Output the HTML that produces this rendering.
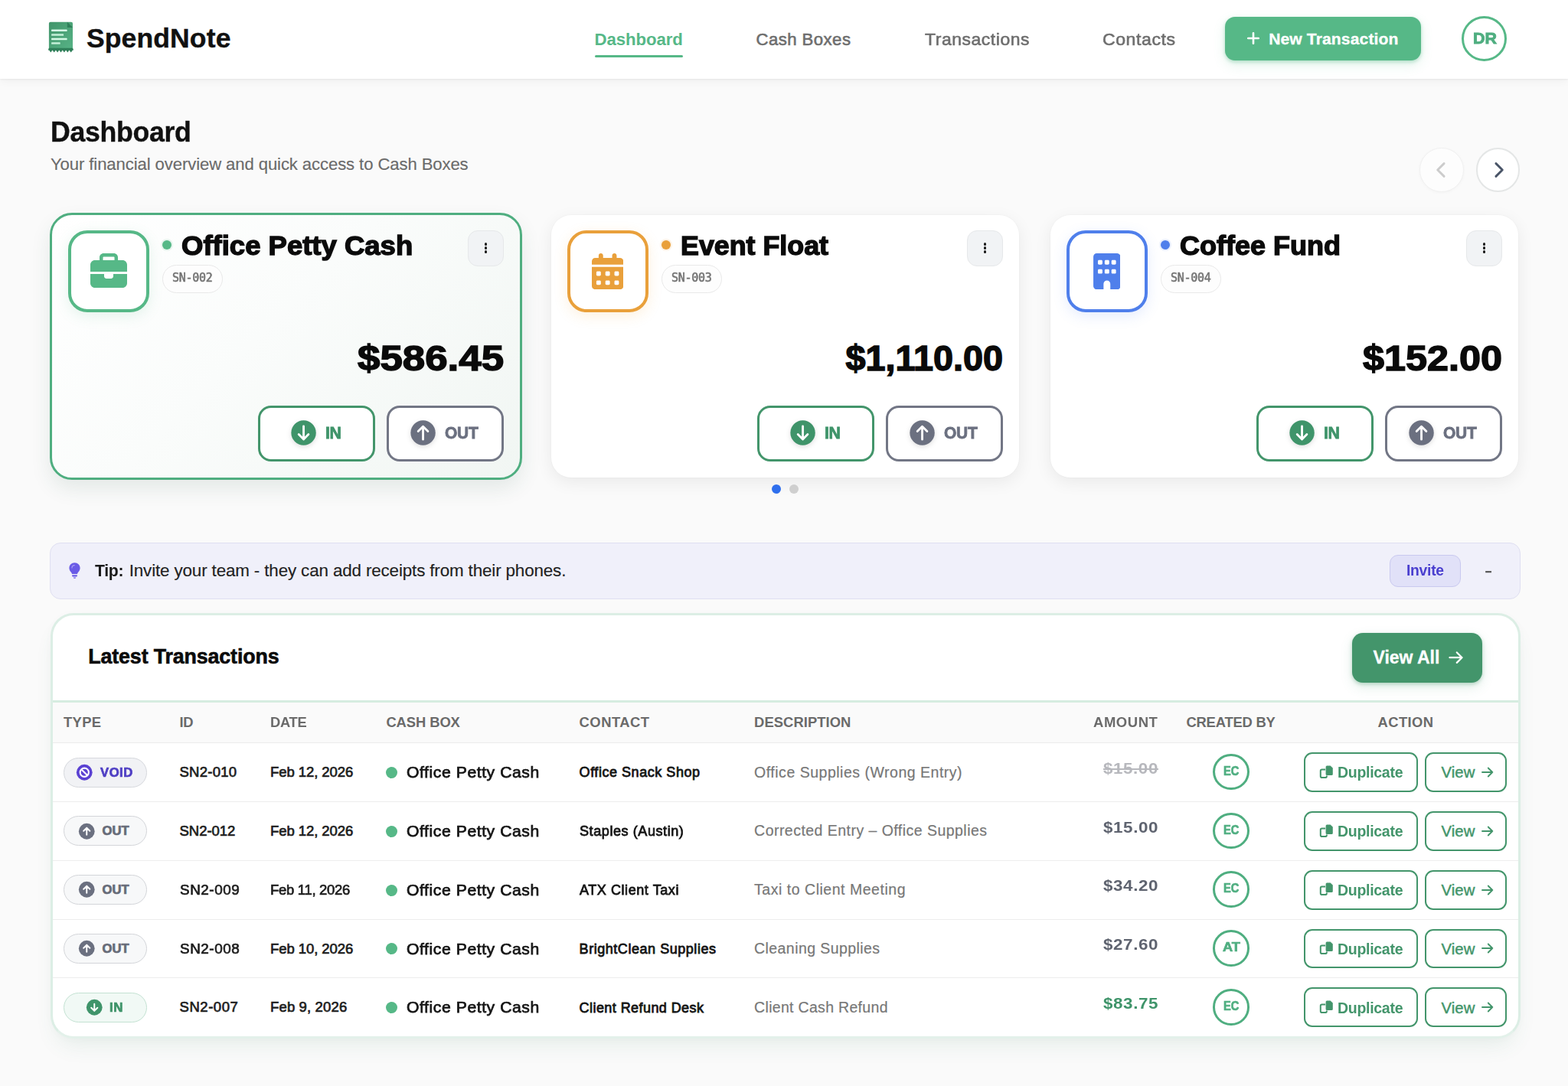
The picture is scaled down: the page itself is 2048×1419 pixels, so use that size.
<!DOCTYPE html>
<html lang="en"><head><meta charset="utf-8"><title>SpendNote Dashboard</title>
<style>
html,body{margin:0;padding:0}
body{width:2048px;height:1419px;overflow:hidden;position:relative;background:#fafafa;font-family:"Liberation Sans",sans-serif}
.t{position:absolute;white-space:nowrap;line-height:1;transform-origin:0 0;-webkit-font-smoothing:antialiased}
</style></head><body>
<div style="position:absolute;left:0px;top:0px;width:2048px;height:103px;box-sizing:border-box;background:#fff;box-shadow:0 1px 2px rgba(0,0,0,0.06),0 3px 12px rgba(0,0,0,0.045);"></div>
<svg style="position:absolute;left:60px;top:26px" width="40" height="46" viewBox="60 26 40 46">
<defs><linearGradient id="lg" x1="0" y1="0" x2="1" y2="1"><stop offset="0" stop-color="#41946a"/><stop offset="1" stop-color="#57b386"/></linearGradient></defs>
<path d="M65.9 28.7 H93 Q95 28.7 95 30.7 V64 H63.9 V30.7 Q63.9 28.7 65.900 28.7Z" fill="url(#lg)"/>
<path d="M87.8 28.7 L95 35.9 H87.8Z" fill="#2f7f59"/>
<path d="M63.9 62.8 H95 L96.2 65.4 L94.9 65.4 L92.7 68.6 L90.5 65.4 L88.3 68.6 L86.1 65.4 L83.9 68.6 L81.7 65.4 L79.5 68.6 L77.3 65.4 L75.1 68.6 L72.9 65.4 L70.7 68.6 L68.5 65.4 L66.3 68.6 L64.1 65.4 L62.8 65.4 Z" fill="#2f7f59"/>
<rect x="67.100" y="38.6" width="20.5" height="2.5" rx="0.6" fill="#d6fae6"/>
<rect x="67.100" y="44.3" width="16" height="2.5" rx="0.6" fill="#c4f0d8"/>
<rect x="67.100" y="49.8" width="20.5" height="2.5" rx="0.6" fill="#d6fae6"/>
<rect x="67.100" y="55.3" width="11.6" height="2.5" rx="0.6" fill="#c4f0d8"/>
</svg>
<div style="position:absolute;left:776.5px;top:71.5px;width:115.5px;height:3px;box-sizing:border-box;background:#56B887;border-radius:2px;"></div>
<div style="position:absolute;left:1600px;top:22px;width:256px;height:57px;box-sizing:border-box;background:#56B887;border-radius:13px;box-shadow:0 2px 5px rgba(86,184,135,0.40),0 6px 16px rgba(86,184,135,0.16);"></div>
<svg style="position:absolute;left:1629px;top:42px" width="16" height="16" viewBox="0 0 16 16"><path d="M8 1.200V14.800M1.200 8H14.800" stroke="#fff" stroke-width="2.6" stroke-linecap="round"/></svg>
<div style="position:absolute;left:1909px;top:21px;width:59.2px;height:59.2px;box-sizing:border-box;border:3.5px solid #56B887;border-radius:50%;background:#fff;"></div>
<div style="position:absolute;left:1854.2px;top:193px;width:57.6px;height:57.6px;box-sizing:border-box;border-radius:50%;background:#fdfdfd;border:1px solid #f1f1f1;box-shadow:0 1px 4px rgba(0,0,0,0.03);"></div>
<svg style="position:absolute;left:1871.8px;top:211.8px;overflow:visible" width="20" height="20" viewBox="0 0 20 20"><path d="M14.1 1.6 L5.7 10 L14.1 18.4" fill="none" stroke="#cccccc" stroke-width="2.9" stroke-linecap="round" stroke-linejoin="round"/></svg>
<div style="position:absolute;left:1927.9px;top:193px;width:57.6px;height:57.6px;box-sizing:border-box;border-radius:50%;background:#fff;border:2px solid #e4e6e6;"></div>
<svg style="position:absolute;left:1948.2px;top:211.8px;overflow:visible" width="20" height="20" viewBox="0 0 20 20"><path d="M5.9 1.6 L14.3 10 L5.9 18.4" fill="none" stroke="#4a5568" stroke-width="2.9" stroke-linecap="round" stroke-linejoin="round"/></svg>
<div style="position:absolute;left:65px;top:277.5px;width:617px;height:349.5px;box-sizing:border-box;border:3px solid #4FAE80;border-radius:29px;background:linear-gradient(135deg,#ffffff 0%,#fafcfb 45%,#f1f6f3 100%);box-shadow:0 12px 26px rgba(40,90,65,0.10);"></div>
<div style="position:absolute;left:88.5px;top:301.4px;width:106.3px;height:106.4px;box-sizing:border-box;border:4px solid #56B887;border-radius:25px;background:#fff;box-shadow:0 5px 18px rgba(86,184,135,0.15);"></div>
<svg style="position:absolute;left:117.5px;top:330.5px" width="48" height="45" viewBox="0 0 512 480"><path fill="#56B887" d="M184 48H328c4.400 0 8 3.600 8 8V96H176V56c0-4.400 3.600-8 8-8zm-56 8V96H64C28.700 96 0 124.700 0 160v96H192 320 512V160c0-35.300-28.700-64-64-64H384V56c0-30.900-25.100-56-56-56H184c-30.900 0-56 25.100-56 56zM512 288H320v32c0 17.700-14.300 32-32 32H224c-17.700 0-32-14.300-32-32V288H0V416c0 35.300 28.700 64 64 64H448c35.300 0 64-28.700 64-64V288z"/></svg>
<div style="position:absolute;left:212px;top:313.8px;width:12.4px;height:12.4px;box-sizing:border-box;background:#56B887;border-radius:50%;box-shadow:0 0 0 2px rgba(86,184,135,0.12);"></div>
<div style="position:absolute;left:212px;top:345.5px;width:79px;height:37.5px;box-sizing:border-box;border:1px solid #e9e9e9;border-radius:19px;background:#fdfdfd;"></div>
<div style="position:absolute;left:611px;top:301.2px;width:47px;height:47px;box-sizing:border-box;border:1px solid #e6e8ea;border-radius:13px;background:#f1f3f5;"></div>
<div style="position:absolute;left:632.7px;top:317.2px;width:3.6px;height:3.6px;box-sizing:border-box;background:#1a1a1a;border-radius:50%;"></div>
<div style="position:absolute;left:632.7px;top:322.3px;width:3.6px;height:3.6px;box-sizing:border-box;background:#1a1a1a;border-radius:50%;"></div>
<div style="position:absolute;left:632.7px;top:327.4px;width:3.6px;height:3.6px;box-sizing:border-box;background:#1a1a1a;border-radius:50%;"></div>
<div style="position:absolute;left:337.3px;top:529.7px;width:152.6px;height:73px;box-sizing:border-box;border:3px solid #43956B;border-radius:17px;background:#fff;"></div>
<svg style="position:absolute;left:378.65px;top:548.45px;overflow:visible;filter:drop-shadow(0 2px 3px rgba(0,0,0,0.13));" width="35.10" height="35.10" viewBox="-1 -1 26 26"><circle cx="12" cy="12" r="12" fill="#3f946a"/><path d="M12 5.6V18.1M7.3 13.5 L12 18.2 L16.7 13.5" fill="none" stroke="#fff" stroke-width="2.1" stroke-linecap="round" stroke-linejoin="round"/></svg>
<div style="position:absolute;left:505.3px;top:529.7px;width:152.8px;height:73px;box-sizing:border-box;border:3px solid #727685;border-radius:17px;background:#fff;"></div>
<svg style="position:absolute;left:534.85px;top:548.45px;overflow:visible;filter:drop-shadow(0 2px 3px rgba(0,0,0,0.13));" width="35.10" height="35.10" viewBox="-1 -1 26 26"><circle cx="12" cy="12" r="12" fill="#6b7080"/><path d="M12 18.4V5.9M7.3 10.5 L12 5.8 L16.7 10.5" fill="none" stroke="#fff" stroke-width="2.1" stroke-linecap="round" stroke-linejoin="round"/></svg>
<div style="position:absolute;left:720px;top:280.5px;width:611px;height:343.5px;box-sizing:border-box;border-radius:26px;background:#fff;box-shadow:0 6px 22px rgba(0,0,0,0.07),0 0 0 1px rgba(0,0,0,0.015);"></div>
<div style="position:absolute;left:740.5px;top:301.4px;width:106.3px;height:106.4px;box-sizing:border-box;border:4px solid #E9A03B;border-radius:25px;background:#fff;box-shadow:0 5px 18px rgba(240,160,50,0.15);"></div>
<svg style="position:absolute;left:772.5px;top:330.5px" width="41.3" height="47.2" viewBox="0 0 448 512"><path fill="#E9A03B" d="M128 0c17.700 0 32 14.300 32 32V64H288V32c0-17.700 14.300-32 32-32s32 14.300 32 32V64h48c26.500 0 48 21.500 48 48v48H0V112C0 85.500 21.500 64 48 64H96V32c0-17.700 14.300-32 32-32zM0 192H448V464c0 26.500-21.500 48-48 48H48c-26.500 0-48-21.500-48-48V192zm64 80v32c0 8.800 7.200 16 16 16h32c8.800 0 16-7.200 16-16V272c0-8.800-7.200-16-16-16H80c-8.800 0-16 7.200-16 16zm128 0v32c0 8.800 7.200 16 16 16h32c8.800 0 16-7.200 16-16V272c0-8.800-7.200-16-16-16H208c-8.800 0-16 7.200-16 16zm144-16c-8.800 0-16 7.200-16 16v32c0 8.800 7.200 16 16 16h32c8.800 0 16-7.200 16-16V272c0-8.800-7.200-16-16-16H336zM64 400v32c0 8.800 7.200 16 16 16h32c8.800 0 16-7.200 16-16V400c0-8.800-7.200-16-16-16H80c-8.800 0-16 7.200-16 16zm144-16c-8.800 0-16 7.200-16 16v32c0 8.800 7.200 16 16 16h32c8.800 0 16-7.200 16-16V400c0-8.800-7.200-16-16-16H208zm112 16v32c0 8.800 7.200 16 16 16h32c8.800 0 16-7.200 16-16V400c0-8.800-7.200-16-16-16H336c-8.800 0-16 7.200-16 16z"/></svg>
<div style="position:absolute;left:864px;top:313.8px;width:12.4px;height:12.4px;box-sizing:border-box;background:#E9A03B;border-radius:50%;box-shadow:0 0 0 2px rgba(240,160,50,0.12);"></div>
<div style="position:absolute;left:864px;top:345.5px;width:79px;height:37.5px;box-sizing:border-box;border:1px solid #e9e9e9;border-radius:19px;background:#fdfdfd;"></div>
<div style="position:absolute;left:1263px;top:301.2px;width:47px;height:47px;box-sizing:border-box;border:1px solid #e6e8ea;border-radius:13px;background:#f1f3f5;"></div>
<div style="position:absolute;left:1284.7px;top:317.2px;width:3.6px;height:3.6px;box-sizing:border-box;background:#1a1a1a;border-radius:50%;"></div>
<div style="position:absolute;left:1284.7px;top:322.3px;width:3.6px;height:3.6px;box-sizing:border-box;background:#1a1a1a;border-radius:50%;"></div>
<div style="position:absolute;left:1284.7px;top:327.4px;width:3.6px;height:3.6px;box-sizing:border-box;background:#1a1a1a;border-radius:50%;"></div>
<div style="position:absolute;left:989.3px;top:529.7px;width:152.6px;height:73px;box-sizing:border-box;border:3px solid #43956B;border-radius:17px;background:#fff;"></div>
<svg style="position:absolute;left:1030.65px;top:548.45px;overflow:visible;filter:drop-shadow(0 2px 3px rgba(0,0,0,0.13));" width="35.10" height="35.10" viewBox="-1 -1 26 26"><circle cx="12" cy="12" r="12" fill="#3f946a"/><path d="M12 5.6V18.1M7.3 13.5 L12 18.2 L16.7 13.5" fill="none" stroke="#fff" stroke-width="2.1" stroke-linecap="round" stroke-linejoin="round"/></svg>
<div style="position:absolute;left:1157.3px;top:529.7px;width:152.8px;height:73px;box-sizing:border-box;border:3px solid #727685;border-radius:17px;background:#fff;"></div>
<svg style="position:absolute;left:1186.85px;top:548.45px;overflow:visible;filter:drop-shadow(0 2px 3px rgba(0,0,0,0.13));" width="35.10" height="35.10" viewBox="-1 -1 26 26"><circle cx="12" cy="12" r="12" fill="#6b7080"/><path d="M12 18.4V5.9M7.3 10.5 L12 5.8 L16.7 10.5" fill="none" stroke="#fff" stroke-width="2.1" stroke-linecap="round" stroke-linejoin="round"/></svg>
<div style="position:absolute;left:1372px;top:280.5px;width:611px;height:343.5px;box-sizing:border-box;border-radius:26px;background:#fff;box-shadow:0 6px 22px rgba(0,0,0,0.07),0 0 0 1px rgba(0,0,0,0.015);"></div>
<div style="position:absolute;left:1392.5px;top:301.4px;width:106.3px;height:106.4px;box-sizing:border-box;border:4px solid #4F7FEB;border-radius:25px;background:#fff;box-shadow:0 5px 18px rgba(80,130,240,0.15);"></div>
<svg style="position:absolute;left:1427.5px;top:330.5px" width="35.6" height="47.3" viewBox="0 0 384 512"><path fill="#4F7FEB" d="M48 0C21.500 0 0 21.500 0 48V464c0 26.500 21.500 48 48 48h96V432c0-26.500 21.500-48 48-48s48 21.500 48 48v80h96c26.500 0 48-21.500 48-48V48c0-26.500-21.500-48-48-48H48zM64 240c0-8.800 7.200-16 16-16h32c8.800 0 16 7.200 16 16v32c0 8.800-7.200 16-16 16H80c-8.800 0-16-7.200-16-16V240zm112-16h32c8.800 0 16 7.200 16 16v32c0 8.800-7.200 16-16 16H176c-8.800 0-16-7.200-16-16V240c0-8.800 7.200-16 16-16zm80 16c0-8.800 7.200-16 16-16h32c8.800 0 16 7.200 16 16v32c0 8.800-7.200 16-16 16H272c-8.800 0-16-7.200-16-16V240zM80 96h32c8.800 0 16 7.200 16 16v32c0 8.800-7.200 16-16 16H80c-8.800 0-16-7.200-16-16V112c0-8.800 7.200-16 16-16zm80 16c0-8.800 7.200-16 16-16h32c8.800 0 16 7.200 16 16v32c0 8.800-7.200 16-16 16H176c-8.800 0-16-7.200-16-16V112zM272 96h32c8.800 0 16 7.200 16 16v32c0 8.800-7.200 16-16 16H272c-8.800 0-16-7.200-16-16V112c0-8.800 7.200-16 16-16z"/></svg>
<div style="position:absolute;left:1516px;top:313.8px;width:12.4px;height:12.4px;box-sizing:border-box;background:#4F7FEB;border-radius:50%;box-shadow:0 0 0 2px rgba(80,130,240,0.12);"></div>
<div style="position:absolute;left:1516px;top:345.5px;width:79px;height:37.5px;box-sizing:border-box;border:1px solid #e9e9e9;border-radius:19px;background:#fdfdfd;"></div>
<div style="position:absolute;left:1915px;top:301.2px;width:47px;height:47px;box-sizing:border-box;border:1px solid #e6e8ea;border-radius:13px;background:#f1f3f5;"></div>
<div style="position:absolute;left:1936.7px;top:317.2px;width:3.6px;height:3.6px;box-sizing:border-box;background:#1a1a1a;border-radius:50%;"></div>
<div style="position:absolute;left:1936.7px;top:322.3px;width:3.6px;height:3.6px;box-sizing:border-box;background:#1a1a1a;border-radius:50%;"></div>
<div style="position:absolute;left:1936.7px;top:327.4px;width:3.6px;height:3.6px;box-sizing:border-box;background:#1a1a1a;border-radius:50%;"></div>
<div style="position:absolute;left:1641.3px;top:529.7px;width:152.6px;height:73px;box-sizing:border-box;border:3px solid #43956B;border-radius:17px;background:#fff;"></div>
<svg style="position:absolute;left:1682.65px;top:548.45px;overflow:visible;filter:drop-shadow(0 2px 3px rgba(0,0,0,0.13));" width="35.10" height="35.10" viewBox="-1 -1 26 26"><circle cx="12" cy="12" r="12" fill="#3f946a"/><path d="M12 5.6V18.1M7.3 13.5 L12 18.2 L16.7 13.5" fill="none" stroke="#fff" stroke-width="2.1" stroke-linecap="round" stroke-linejoin="round"/></svg>
<div style="position:absolute;left:1809.3px;top:529.7px;width:152.8px;height:73px;box-sizing:border-box;border:3px solid #727685;border-radius:17px;background:#fff;"></div>
<svg style="position:absolute;left:1838.85px;top:548.45px;overflow:visible;filter:drop-shadow(0 2px 3px rgba(0,0,0,0.13));" width="35.10" height="35.10" viewBox="-1 -1 26 26"><circle cx="12" cy="12" r="12" fill="#6b7080"/><path d="M12 18.4V5.9M7.3 10.5 L12 5.8 L16.7 10.5" fill="none" stroke="#fff" stroke-width="2.1" stroke-linecap="round" stroke-linejoin="round"/></svg>
<div style="position:absolute;left:1007.7px;top:633.1px;width:12px;height:12px;box-sizing:border-box;background:#2f6fed;border-radius:50%;"></div>
<div style="position:absolute;left:1031px;top:633.1px;width:12px;height:12px;box-sizing:border-box;background:#cfcfcf;border-radius:50%;"></div>
<div style="position:absolute;left:65px;top:709.3px;width:1920.7px;height:74.2px;box-sizing:border-box;background:#f0f0fa;border:1px solid #dfdff1;border-radius:14px;"></div>
<svg style="position:absolute;left:89.500px;top:735px" width="15" height="21" viewBox="0 0 15 21"><path fill="#6a5be6" d="M7.500 0.300 C3.500 0.300 0.400 3.400 0.400 7.200 c0 2.300 1.100 3.900 2.300 5.200 c0.700 0.800 1.200 1.600 1.300 2.600 h7 c0.100-1 0.600-1.800 1.300-2.600 c1.200-1.300 2.300-2.900 2.300-5.200 C14.600 3.400 11.500 0.300 7.500 0.300z M4.200 16.300 h6.600 v1.100 c0 0.600-0.400 1-1 1 h-4.600 c-0.600 0-1-0.400-1-1z M5.800 19.400 h3.400 c0 0.800-0.800 1.400-1.700 1.400 s-1.700-0.600-1.700-1.400z"/><path d="M4 7 C4 5 5.500 3.700 7.300 3.600" stroke="#a79df3" stroke-width="1.100" fill="none" stroke-linecap="round"/></svg>
<div style="position:absolute;left:1815.2px;top:725.1px;width:93.3px;height:41.6px;box-sizing:border-box;background:#e1e1f8;border:1px solid #c9c9ef;border-radius:11px;"></div>
<div style="position:absolute;left:65.5px;top:801px;width:1920.3px;height:555.7px;box-sizing:border-box;background:#fff;border:3px solid #dceee5;border-bottom-color:#e3f1ea;border-radius:30px;box-shadow:0 16px 28px -8px rgba(60,140,100,0.11),0 1px 12px rgba(0,0,0,0.02);overflow:hidden;"><div style="position:absolute;left:0;top:111.3px;width:100%;height:3px;background:#d6ece0"></div><div style="position:absolute;left:0;top:114.3px;width:100%;height:52.7px;background:#fafafa;border-bottom:1px solid #ececec;box-sizing:border-box"></div><div style="position:absolute;left:0;top:243.00px;width:100%;height:1px;background:#ededed"></div><div style="position:absolute;left:0;top:319.82px;width:100%;height:1px;background:#ededed"></div><div style="position:absolute;left:0;top:396.64px;width:100%;height:1px;background:#ededed"></div><div style="position:absolute;left:0;top:473.46px;width:100%;height:1px;background:#ededed"></div></div>
<div style="position:absolute;left:1766px;top:827px;width:170px;height:65px;box-sizing:border-box;background:#43956B;border-radius:14px;box-shadow:0 2px 5px rgba(67,149,107,0.35),0 6px 16px rgba(67,149,107,0.15);"></div>
<svg style="position:absolute;left:1891px;top:849px" width="22" height="20" viewBox="0 0 22 20"><path d="M2.500 10.200H18.500M11.800 3.500 L18.500 10.200 L11.800 16.900" fill="none" stroke="#fff" stroke-width="2.300" stroke-linecap="round" stroke-linejoin="round"/></svg>
<div style="position:absolute;left:82.6px;top:989.5px;width:109px;height:39px;box-sizing:border-box;background:#f1f2f5;border:1px solid #d6d8dd;border-radius:20px;"></div>
<svg style="position:absolute;left:99.13px;top:997.73px;overflow:visible" width="22.53" height="22.53" viewBox="-1 -1 26 26"><circle cx="12" cy="12" r="12" fill="#5a41d2"/><circle cx="12" cy="12" r="6.5" fill="none" stroke="#fff" stroke-width="2.4"/><path d="M7.6 7.6 L16.4 16.4" stroke="#fff" stroke-width="2.4"/></svg>
<div style="position:absolute;left:503.8px;top:1001.9px;width:15px;height:15px;box-sizing:border-box;background:#56B887;border-radius:50%;"></div>
<div style="position:absolute;left:1584.2px;top:984.8000000000001px;width:47.6px;height:47.6px;box-sizing:border-box;border:3px solid #4FAE80;border-radius:50%;background:#fff;"></div>
<div style="position:absolute;left:1703.2px;top:983.2px;width:149.2px;height:51.8px;box-sizing:border-box;border:2px solid #43956B;border-radius:11px;background:#fff;"></div>
<svg style="position:absolute;left:1722.500px;top:999.8px" width="18" height="17.500" viewBox="0 0 18 17.500"><path d="M8 5.5 H3.6 Q1.8 5.5 1.8 7.3 V14.2 Q1.8 16 3.6 16 H8.1 Q9.9 16 9.9 14.2 V13.6" fill="none" stroke="#43956B" stroke-width="2"/><path d="M10.1 0.4 H14.6 L17.8 3.6 V11.4 Q17.8 12.9 16.3 12.9 H10.1 Q8.6 12.9 8.6 11.4 V1.9 Q8.6 0.4 10.1 0.4Z" fill="#43956B"/></svg>
<div style="position:absolute;left:1861.3px;top:983.2px;width:106.8px;height:51.8px;box-sizing:border-box;border:2px solid #43956B;border-radius:11px;background:#fff;"></div>
<svg style="position:absolute;left:1933.500px;top:1001.0px" width="18" height="16" viewBox="0 0 18 16"><path d="M2 8H15.300M9.800 2.500 L15.300 8 L9.800 13.500" fill="none" stroke="#43956B" stroke-width="1.900" stroke-linecap="round" stroke-linejoin="round"/></svg>
<div style="position:absolute;left:82.6px;top:1066.32px;width:109px;height:39px;box-sizing:border-box;background:#f7f8f9;border:1px solid #d3d5d9;border-radius:20px;"></div>
<svg style="position:absolute;left:102.23px;top:1074.55px;overflow:visible;" width="22.53" height="22.53" viewBox="-1 -1 26 26"><circle cx="12" cy="12" r="12" fill="#6b7080"/><path d="M12 17.2V7.2M7.3 11.4 L12 6.7 L16.7 11.4" fill="none" stroke="#fff" stroke-width="2.3" stroke-linecap="round" stroke-linejoin="round"/></svg>
<div style="position:absolute;left:503.8px;top:1078.72px;width:15px;height:15px;box-sizing:border-box;background:#56B887;border-radius:50%;"></div>
<div style="position:absolute;left:1584.2px;top:1061.62px;width:47.6px;height:47.6px;box-sizing:border-box;border:3px solid #4FAE80;border-radius:50%;background:#fff;"></div>
<div style="position:absolute;left:1703.2px;top:1060.02px;width:149.2px;height:51.8px;box-sizing:border-box;border:2px solid #43956B;border-radius:11px;background:#fff;"></div>
<svg style="position:absolute;left:1722.500px;top:1076.62px" width="18" height="17.500" viewBox="0 0 18 17.500"><path d="M8 5.5 H3.6 Q1.8 5.5 1.8 7.3 V14.2 Q1.8 16 3.6 16 H8.1 Q9.9 16 9.9 14.2 V13.6" fill="none" stroke="#43956B" stroke-width="2"/><path d="M10.1 0.4 H14.6 L17.8 3.6 V11.4 Q17.8 12.9 16.3 12.9 H10.1 Q8.6 12.9 8.6 11.4 V1.9 Q8.6 0.4 10.1 0.4Z" fill="#43956B"/></svg>
<div style="position:absolute;left:1861.3px;top:1060.02px;width:106.8px;height:51.8px;box-sizing:border-box;border:2px solid #43956B;border-radius:11px;background:#fff;"></div>
<svg style="position:absolute;left:1933.500px;top:1077.82px" width="18" height="16" viewBox="0 0 18 16"><path d="M2 8H15.300M9.800 2.500 L15.300 8 L9.800 13.500" fill="none" stroke="#43956B" stroke-width="1.900" stroke-linecap="round" stroke-linejoin="round"/></svg>
<div style="position:absolute;left:82.6px;top:1143.1399999999999px;width:109px;height:39px;box-sizing:border-box;background:#f7f8f9;border:1px solid #d3d5d9;border-radius:20px;"></div>
<svg style="position:absolute;left:102.23px;top:1151.37px;overflow:visible;" width="22.53" height="22.53" viewBox="-1 -1 26 26"><circle cx="12" cy="12" r="12" fill="#6b7080"/><path d="M12 17.2V7.2M7.3 11.4 L12 6.7 L16.7 11.4" fill="none" stroke="#fff" stroke-width="2.3" stroke-linecap="round" stroke-linejoin="round"/></svg>
<div style="position:absolute;left:503.8px;top:1155.54px;width:15px;height:15px;box-sizing:border-box;background:#56B887;border-radius:50%;"></div>
<div style="position:absolute;left:1584.2px;top:1138.4399999999998px;width:47.6px;height:47.6px;box-sizing:border-box;border:3px solid #4FAE80;border-radius:50%;background:#fff;"></div>
<div style="position:absolute;left:1703.2px;top:1136.84px;width:149.2px;height:51.8px;box-sizing:border-box;border:2px solid #43956B;border-radius:11px;background:#fff;"></div>
<svg style="position:absolute;left:1722.500px;top:1153.4399999999998px" width="18" height="17.500" viewBox="0 0 18 17.500"><path d="M8 5.5 H3.6 Q1.8 5.5 1.8 7.3 V14.2 Q1.8 16 3.6 16 H8.1 Q9.9 16 9.9 14.2 V13.6" fill="none" stroke="#43956B" stroke-width="2"/><path d="M10.1 0.4 H14.6 L17.8 3.6 V11.4 Q17.8 12.9 16.3 12.9 H10.1 Q8.6 12.9 8.6 11.4 V1.9 Q8.6 0.4 10.1 0.4Z" fill="#43956B"/></svg>
<div style="position:absolute;left:1861.3px;top:1136.84px;width:106.8px;height:51.8px;box-sizing:border-box;border:2px solid #43956B;border-radius:11px;background:#fff;"></div>
<svg style="position:absolute;left:1933.500px;top:1154.6399999999999px" width="18" height="16" viewBox="0 0 18 16"><path d="M2 8H15.300M9.800 2.500 L15.300 8 L9.800 13.500" fill="none" stroke="#43956B" stroke-width="1.900" stroke-linecap="round" stroke-linejoin="round"/></svg>
<div style="position:absolute;left:82.6px;top:1219.96px;width:109px;height:39px;box-sizing:border-box;background:#f7f8f9;border:1px solid #d3d5d9;border-radius:20px;"></div>
<svg style="position:absolute;left:102.23px;top:1228.19px;overflow:visible;" width="22.53" height="22.53" viewBox="-1 -1 26 26"><circle cx="12" cy="12" r="12" fill="#6b7080"/><path d="M12 17.2V7.2M7.3 11.4 L12 6.7 L16.7 11.4" fill="none" stroke="#fff" stroke-width="2.3" stroke-linecap="round" stroke-linejoin="round"/></svg>
<div style="position:absolute;left:503.8px;top:1232.3600000000001px;width:15px;height:15px;box-sizing:border-box;background:#56B887;border-radius:50%;"></div>
<div style="position:absolute;left:1584.2px;top:1215.26px;width:47.6px;height:47.6px;box-sizing:border-box;border:3px solid #4FAE80;border-radius:50%;background:#fff;"></div>
<div style="position:absolute;left:1703.2px;top:1213.66px;width:149.2px;height:51.8px;box-sizing:border-box;border:2px solid #43956B;border-radius:11px;background:#fff;"></div>
<svg style="position:absolute;left:1722.500px;top:1230.26px" width="18" height="17.500" viewBox="0 0 18 17.500"><path d="M8 5.5 H3.6 Q1.8 5.5 1.8 7.3 V14.2 Q1.8 16 3.6 16 H8.1 Q9.9 16 9.9 14.2 V13.6" fill="none" stroke="#43956B" stroke-width="2"/><path d="M10.1 0.4 H14.6 L17.8 3.6 V11.4 Q17.8 12.9 16.3 12.9 H10.1 Q8.6 12.9 8.6 11.4 V1.9 Q8.6 0.4 10.1 0.4Z" fill="#43956B"/></svg>
<div style="position:absolute;left:1861.3px;top:1213.66px;width:106.8px;height:51.8px;box-sizing:border-box;border:2px solid #43956B;border-radius:11px;background:#fff;"></div>
<svg style="position:absolute;left:1933.500px;top:1231.46px" width="18" height="16" viewBox="0 0 18 16"><path d="M2 8H15.300M9.800 2.500 L15.300 8 L9.800 13.500" fill="none" stroke="#43956B" stroke-width="1.900" stroke-linecap="round" stroke-linejoin="round"/></svg>
<div style="position:absolute;left:82.6px;top:1296.78px;width:109px;height:39px;box-sizing:border-box;background:#f1f9f5;border:1px solid #c3e2d2;border-radius:20px;"></div>
<svg style="position:absolute;left:111.83px;top:1305.01px;overflow:visible;" width="22.53" height="22.53" viewBox="-1 -1 26 26"><circle cx="12" cy="12" r="12" fill="#3f946a"/><path d="M12 6.8V16.8M7.3 12.6 L12 17.3 L16.7 12.6" fill="none" stroke="#fff" stroke-width="2.3" stroke-linecap="round" stroke-linejoin="round"/></svg>
<div style="position:absolute;left:503.8px;top:1309.18px;width:15px;height:15px;box-sizing:border-box;background:#56B887;border-radius:50%;"></div>
<div style="position:absolute;left:1584.2px;top:1292.08px;width:47.6px;height:47.6px;box-sizing:border-box;border:3px solid #4FAE80;border-radius:50%;background:#fff;"></div>
<div style="position:absolute;left:1703.2px;top:1290.48px;width:149.2px;height:51.8px;box-sizing:border-box;border:2px solid #43956B;border-radius:11px;background:#fff;"></div>
<svg style="position:absolute;left:1722.500px;top:1307.08px" width="18" height="17.500" viewBox="0 0 18 17.500"><path d="M8 5.5 H3.6 Q1.8 5.5 1.8 7.3 V14.2 Q1.8 16 3.6 16 H8.1 Q9.9 16 9.9 14.2 V13.6" fill="none" stroke="#43956B" stroke-width="2"/><path d="M10.1 0.4 H14.6 L17.8 3.6 V11.4 Q17.8 12.9 16.3 12.9 H10.1 Q8.6 12.9 8.6 11.4 V1.9 Q8.6 0.4 10.1 0.4Z" fill="#43956B"/></svg>
<div style="position:absolute;left:1861.3px;top:1290.48px;width:106.8px;height:51.8px;box-sizing:border-box;border:2px solid #43956B;border-radius:11px;background:#fff;"></div>
<svg style="position:absolute;left:1933.500px;top:1308.28px" width="18" height="16" viewBox="0 0 18 16"><path d="M2 8H15.300M9.800 2.500 L15.300 8 L9.800 13.500" fill="none" stroke="#43956B" stroke-width="1.900" stroke-linecap="round" stroke-linejoin="round"/></svg>
<span class="t" id="t0" style="left:112.90px;top:32.75px;font-size:35.5px;font-weight:700;color:#111;-webkit-text-stroke:0.4px #111;letter-spacing:0.141px;">SpendNote</span>
<span class="t" id="t1" style="left:776.60px;top:40.71px;font-size:22.2px;font-weight:700;color:#56B887;letter-spacing:-0.086px;">Dashboard</span>
<span class="t" id="t2" style="left:987.50px;top:40.71px;font-size:22.2px;font-weight:400;color:#6e6e6e;-webkit-text-stroke:0.6px #6e6e6e;letter-spacing:0.429px;">Cash Boxes</span>
<span class="t" id="t3" style="left:1207.50px;top:40.71px;font-size:22.2px;font-weight:400;color:#6e6e6e;-webkit-text-stroke:0.6px #6e6e6e;letter-spacing:0.550px;transform:scaleX(1.0321);">Transactions</span>
<span class="t" id="t4" style="left:1440.00px;top:40.71px;font-size:22.2px;font-weight:400;color:#6e6e6e;-webkit-text-stroke:0.6px #6e6e6e;letter-spacing:0.550px;transform:scaleX(1.0392);">Contacts</span>
<span class="t" id="t5" style="left:1657.20px;top:40.04px;font-size:21.1px;font-weight:700;color:#fff;-webkit-text-stroke:0.3px #fff;letter-spacing:0.111px;">New Transaction</span>
<span class="t" id="t6" style="left:1923.80px;top:39.63px;font-size:20.4px;font-weight:700;color:#4FAE80;-webkit-text-stroke:0.9px #4FAE80;transform:scaleX(1.0525);">DR</span>
<span class="t" id="t7" style="left:66.10px;top:153.88px;font-size:37px;font-weight:700;color:#111;-webkit-text-stroke:0.4px #111;letter-spacing:-0.300px;transform:scaleX(0.9635);">Dashboard</span>
<span class="t" id="t8" style="left:66.00px;top:203.99px;font-size:22.1px;font-weight:400;color:#6b6b6b;-webkit-text-stroke:0.15px #6b6b6b;letter-spacing:-0.093px;">Your financial overview and quick access to Cash Boxes</span>
<span class="t" id="t9" style="left:236.80px;top:303.54px;font-size:34.8px;font-weight:700;color:#0b0b0b;-webkit-text-stroke:1.4px #0b0b0b;transform:scaleX(1.0488);">Office Petty Cash</span>
<span class="t" id="t10" style="left:225.00px;top:356.05px;font-size:15.3px;font-weight:400;color:#747474;font-family:'DejaVu Sans Mono', 'Liberation Mono', monospace;-webkit-text-stroke:0.55px #747474;letter-spacing:-0.300px;transform:scaleX(0.9820);">SN-002</span>
<span class="t" id="t11" style="left:466.90px;top:444.98px;font-size:46.8px;font-weight:700;color:#0a0a0a;-webkit-text-stroke:1.45px #0a0a0a;transform:scaleX(1.1296);">$586.45</span>
<span class="t" id="t12" style="left:425.00px;top:556.18px;font-size:21.4px;font-weight:700;color:#3f946a;-webkit-text-stroke:0.8px #3f946a;letter-spacing:-0.300px;transform:scaleX(0.9950);">IN</span>
<span class="t" id="t13" style="left:581.30px;top:556.18px;font-size:21.4px;font-weight:700;color:#6b7080;-webkit-text-stroke:0.8px #6b7080;letter-spacing:-0.300px;transform:scaleX(0.9808);">OUT</span>
<span class="t" id="t14" style="left:888.80px;top:303.54px;font-size:34.8px;font-weight:700;color:#0b0b0b;-webkit-text-stroke:1.4px #0b0b0b;transform:scaleX(1.0291);">Event Float</span>
<span class="t" id="t15" style="left:877.00px;top:356.05px;font-size:15.3px;font-weight:400;color:#747474;font-family:'DejaVu Sans Mono', 'Liberation Mono', monospace;-webkit-text-stroke:0.55px #747474;letter-spacing:-0.300px;transform:scaleX(0.9820);">SN-003</span>
<span class="t" id="t16" style="left:1104.40px;top:444.98px;font-size:46.8px;font-weight:700;color:#0a0a0a;-webkit-text-stroke:1.45px #0a0a0a;">$1,110.00</span>
<span class="t" id="t17" style="left:1077.00px;top:556.18px;font-size:21.4px;font-weight:700;color:#3f946a;-webkit-text-stroke:0.8px #3f946a;letter-spacing:-0.300px;transform:scaleX(0.9950);">IN</span>
<span class="t" id="t18" style="left:1233.30px;top:556.18px;font-size:21.4px;font-weight:700;color:#6b7080;-webkit-text-stroke:0.8px #6b7080;letter-spacing:-0.300px;transform:scaleX(0.9808);">OUT</span>
<span class="t" id="t19" style="left:1540.80px;top:303.54px;font-size:34.8px;font-weight:700;color:#0b0b0b;-webkit-text-stroke:1.4px #0b0b0b;transform:scaleX(1.0346);">Coffee Fund</span>
<span class="t" id="t20" style="left:1529.00px;top:356.05px;font-size:15.3px;font-weight:400;color:#747474;font-family:'DejaVu Sans Mono', 'Liberation Mono', monospace;-webkit-text-stroke:0.55px #747474;letter-spacing:-0.300px;transform:scaleX(0.9820);">SN-004</span>
<span class="t" id="t21" style="left:1780.00px;top:444.98px;font-size:46.8px;font-weight:700;color:#0a0a0a;-webkit-text-stroke:1.45px #0a0a0a;transform:scaleX(1.0758);">$152.00</span>
<span class="t" id="t22" style="left:1729.00px;top:556.18px;font-size:21.4px;font-weight:700;color:#3f946a;-webkit-text-stroke:0.8px #3f946a;letter-spacing:-0.300px;transform:scaleX(0.9950);">IN</span>
<span class="t" id="t23" style="left:1885.30px;top:556.18px;font-size:21.4px;font-weight:700;color:#6b7080;-webkit-text-stroke:0.8px #6b7080;letter-spacing:-0.300px;transform:scaleX(0.9808);">OUT</span>
<span class="t" id="t24" style="left:123.90px;top:734.74px;font-size:22.4px;font-weight:700;color:#1a1a1a;letter-spacing:-0.300px;transform:scaleX(0.9461);">Tip:</span>
<span class="t" id="t25" style="left:168.70px;top:734.74px;font-size:22.4px;font-weight:400;color:#222;-webkit-text-stroke:0.15px #222;letter-spacing:-0.138px;">Invite your team - they can add receipts from their phones.</span>
<span class="t" id="t26" style="left:1837.40px;top:734.76px;font-size:20.6px;font-weight:700;color:#4a3fcf;letter-spacing:-0.300px;transform:scaleX(0.9389);">Invite</span>
<span class="t" id="t27" style="left:1938.80px;top:734.13px;font-size:23px;font-weight:400;color:#555;-webkit-text-stroke:0.3px #555;transform:scaleX(1.3295);">-</span>
<span class="t" id="t28" style="left:115.30px;top:845.41px;font-size:26.8px;font-weight:700;color:#0b0b0b;-webkit-text-stroke:0.6px #0b0b0b;letter-spacing:-0.133px;">Latest Transactions</span>
<span class="t" id="t29" style="left:1793.50px;top:847.93px;font-size:23px;font-weight:700;color:#fff;-webkit-text-stroke:0.3px #fff;letter-spacing:-0.020px;">View All</span>
<span class="t" id="t30" style="left:83.00px;top:935.32px;font-size:18.4px;font-weight:700;color:#6a6a6a;letter-spacing:0.318px;">TYPE</span>
<span class="t" id="t31" style="left:234.40px;top:935.32px;font-size:18.4px;font-weight:700;color:#6a6a6a;letter-spacing:-0.300px;">ID</span>
<span class="t" id="t32" style="left:352.90px;top:935.32px;font-size:18.4px;font-weight:700;color:#6a6a6a;letter-spacing:-0.300px;transform:scaleX(0.9958);">DATE</span>
<span class="t" id="t33" style="left:504.40px;top:935.32px;font-size:18.4px;font-weight:700;color:#6a6a6a;letter-spacing:-0.083px;">CASH BOX</span>
<span class="t" id="t34" style="left:756.60px;top:935.32px;font-size:18.4px;font-weight:700;color:#6a6a6a;letter-spacing:0.478px;">CONTACT</span>
<span class="t" id="t35" style="left:985.10px;top:935.32px;font-size:18.4px;font-weight:700;color:#6a6a6a;letter-spacing:0.061px;">DESCRIPTION</span>
<span class="t" id="t36" style="left:1427.50px;top:935.32px;font-size:18.4px;font-weight:700;color:#6a6a6a;letter-spacing:0.550px;transform:scaleX(1.0042);">AMOUNT</span>
<span class="t" id="t37" style="left:1549.40px;top:935.32px;font-size:18.4px;font-weight:700;color:#6a6a6a;letter-spacing:-0.188px;">CREATED BY</span>
<span class="t" id="t38" style="left:1799.60px;top:935.32px;font-size:18.4px;font-weight:700;color:#6a6a6a;letter-spacing:0.380px;">ACTION</span>
<span class="t" id="t39" style="left:130.70px;top:1001.65px;font-size:16.6px;font-weight:700;color:#4f3fc4;-webkit-text-stroke:0.7px #4f3fc4;letter-spacing:0.550px;transform:scaleX(1.0017);">VOID</span>
<span class="t" id="t40" style="left:234.50px;top:1000.04px;font-size:18.5px;font-weight:400;color:#1d1d1d;-webkit-text-stroke:0.7px #1d1d1d;letter-spacing:0.247px;">SN2-010</span>
<span class="t" id="t41" style="left:353.00px;top:1000.04px;font-size:18.5px;font-weight:400;color:#1d1d1d;-webkit-text-stroke:0.7px #1d1d1d;letter-spacing:-0.076px;">Feb 12, 2026</span>
<span class="t" id="t42" style="left:531.30px;top:999.16px;font-size:20.6px;font-weight:400;color:#151515;-webkit-text-stroke:0.75px #151515;letter-spacing:0.550px;transform:scaleX(1.0274);">Office Petty Cash</span>
<span class="t" id="t43" style="left:756.60px;top:1000.36px;font-size:18px;font-weight:400;color:#151515;-webkit-text-stroke:0.8px #151515;letter-spacing:0.540px;">Office Snack Shop</span>
<span class="t" id="t44" style="left:985.10px;top:999.59px;font-size:19.5px;font-weight:400;color:#777;-webkit-text-stroke:0.2px #777;letter-spacing:0.510px;">Office Supplies (Wrong Entry)</span>
<span class="t" id="t45" style="left:1440.70px;top:993.70px;font-size:20.2px;font-weight:700;color:#b7b8bd;letter-spacing:0.550px;transform:scaleX(1.1054);text-decoration:line-through;text-decoration-thickness:1.500px;">$15.00</span>
<span class="t" id="t46" style="left:1598.00px;top:998.77px;font-size:17.4px;font-weight:700;color:#4FAE80;-webkit-text-stroke:0.7px #4FAE80;transform:scaleX(0.8398);">EC</span>
<span class="t" id="t47" style="left:1747.10px;top:999.42px;font-size:20.3px;font-weight:700;color:#43956B;letter-spacing:-0.300px;transform:scaleX(0.9618);">Duplicate</span>
<span class="t" id="t48" style="left:1882.40px;top:999.42px;font-size:20.3px;font-weight:400;color:#43956B;-webkit-text-stroke:0.45px #43956B;letter-spacing:0.135px;">View</span>
<span class="t" id="t49" style="left:133.60px;top:1078.47px;font-size:16.6px;font-weight:700;color:#666b78;-webkit-text-stroke:0.7px #666b78;letter-spacing:-0.016px;">OUT</span>
<span class="t" id="t50" style="left:234.50px;top:1076.86px;font-size:18.5px;font-weight:400;color:#1d1d1d;-webkit-text-stroke:0.7px #1d1d1d;letter-spacing:-0.019px;">SN2-012</span>
<span class="t" id="t51" style="left:353.00px;top:1076.86px;font-size:18.5px;font-weight:400;color:#1d1d1d;-webkit-text-stroke:0.7px #1d1d1d;letter-spacing:-0.076px;">Feb 12, 2026</span>
<span class="t" id="t52" style="left:531.30px;top:1075.98px;font-size:20.6px;font-weight:400;color:#151515;-webkit-text-stroke:0.75px #151515;letter-spacing:0.550px;transform:scaleX(1.0274);">Office Petty Cash</span>
<span class="t" id="t53" style="left:756.60px;top:1077.18px;font-size:18px;font-weight:400;color:#151515;-webkit-text-stroke:0.8px #151515;letter-spacing:0.550px;transform:scaleX(1.0043);">Staples (Austin)</span>
<span class="t" id="t54" style="left:985.10px;top:1076.41px;font-size:19.5px;font-weight:400;color:#777;-webkit-text-stroke:0.2px #777;letter-spacing:0.465px;">Corrected Entry – Office Supplies</span>
<span class="t" id="t55" style="left:1440.50px;top:1070.52px;font-size:20.2px;font-weight:700;color:#5f6470;letter-spacing:0.550px;transform:scaleX(1.1085);">$15.00</span>
<span class="t" id="t56" style="left:1598.00px;top:1075.59px;font-size:17.4px;font-weight:700;color:#4FAE80;-webkit-text-stroke:0.7px #4FAE80;transform:scaleX(0.8398);">EC</span>
<span class="t" id="t57" style="left:1747.10px;top:1076.24px;font-size:20.3px;font-weight:700;color:#43956B;letter-spacing:-0.300px;transform:scaleX(0.9618);">Duplicate</span>
<span class="t" id="t58" style="left:1882.40px;top:1076.24px;font-size:20.3px;font-weight:400;color:#43956B;-webkit-text-stroke:0.45px #43956B;letter-spacing:0.135px;">View</span>
<span class="t" id="t59" style="left:133.60px;top:1155.29px;font-size:16.6px;font-weight:700;color:#666b78;-webkit-text-stroke:0.7px #666b78;letter-spacing:-0.016px;">OUT</span>
<span class="t" id="t60" style="left:234.50px;top:1153.68px;font-size:18.5px;font-weight:400;color:#1d1d1d;-webkit-text-stroke:0.7px #1d1d1d;letter-spacing:0.550px;transform:scaleX(1.0195);">SN2-009</span>
<span class="t" id="t61" style="left:353.00px;top:1153.68px;font-size:18.5px;font-weight:400;color:#1d1d1d;-webkit-text-stroke:0.7px #1d1d1d;letter-spacing:-0.300px;transform:scaleX(0.9993);">Feb 11, 2026</span>
<span class="t" id="t62" style="left:531.30px;top:1152.80px;font-size:20.6px;font-weight:400;color:#151515;-webkit-text-stroke:0.75px #151515;letter-spacing:0.550px;transform:scaleX(1.0274);">Office Petty Cash</span>
<span class="t" id="t63" style="left:756.60px;top:1154.00px;font-size:18px;font-weight:400;color:#151515;-webkit-text-stroke:0.8px #151515;letter-spacing:0.550px;transform:scaleX(1.0024);">ATX Client Taxi</span>
<span class="t" id="t64" style="left:985.10px;top:1153.23px;font-size:19.5px;font-weight:400;color:#777;-webkit-text-stroke:0.2px #777;letter-spacing:0.523px;">Taxi to Client Meeting</span>
<span class="t" id="t65" style="left:1440.50px;top:1147.34px;font-size:20.2px;font-weight:700;color:#5f6470;letter-spacing:0.550px;transform:scaleX(1.1085);">$34.20</span>
<span class="t" id="t66" style="left:1598.00px;top:1152.41px;font-size:17.4px;font-weight:700;color:#4FAE80;-webkit-text-stroke:0.7px #4FAE80;transform:scaleX(0.8398);">EC</span>
<span class="t" id="t67" style="left:1747.10px;top:1153.06px;font-size:20.3px;font-weight:700;color:#43956B;letter-spacing:-0.300px;transform:scaleX(0.9618);">Duplicate</span>
<span class="t" id="t68" style="left:1882.40px;top:1153.06px;font-size:20.3px;font-weight:400;color:#43956B;-webkit-text-stroke:0.45px #43956B;letter-spacing:0.135px;">View</span>
<span class="t" id="t69" style="left:133.60px;top:1232.11px;font-size:16.6px;font-weight:700;color:#666b78;-webkit-text-stroke:0.7px #666b78;letter-spacing:-0.016px;">OUT</span>
<span class="t" id="t70" style="left:234.50px;top:1230.50px;font-size:18.5px;font-weight:400;color:#1d1d1d;-webkit-text-stroke:0.7px #1d1d1d;letter-spacing:0.550px;transform:scaleX(1.0195);">SN2-008</span>
<span class="t" id="t71" style="left:353.00px;top:1230.50px;font-size:18.5px;font-weight:400;color:#1d1d1d;-webkit-text-stroke:0.7px #1d1d1d;letter-spacing:-0.076px;">Feb 10, 2026</span>
<span class="t" id="t72" style="left:531.30px;top:1229.62px;font-size:20.6px;font-weight:400;color:#151515;-webkit-text-stroke:0.75px #151515;letter-spacing:0.550px;transform:scaleX(1.0274);">Office Petty Cash</span>
<span class="t" id="t73" style="left:756.60px;top:1230.82px;font-size:18px;font-weight:400;color:#151515;-webkit-text-stroke:0.8px #151515;letter-spacing:0.542px;">BrightClean Supplies</span>
<span class="t" id="t74" style="left:985.10px;top:1230.05px;font-size:19.5px;font-weight:400;color:#777;-webkit-text-stroke:0.2px #777;letter-spacing:0.419px;">Cleaning Supplies</span>
<span class="t" id="t75" style="left:1440.50px;top:1224.16px;font-size:20.2px;font-weight:700;color:#5f6470;letter-spacing:0.550px;transform:scaleX(1.1085);">$27.60</span>
<span class="t" id="t76" style="left:1596.50px;top:1229.23px;font-size:17.4px;font-weight:700;color:#4FAE80;-webkit-text-stroke:0.7px #4FAE80;transform:scaleX(1.0507);">AT</span>
<span class="t" id="t77" style="left:1747.10px;top:1229.88px;font-size:20.3px;font-weight:700;color:#43956B;letter-spacing:-0.300px;transform:scaleX(0.9618);">Duplicate</span>
<span class="t" id="t78" style="left:1882.40px;top:1229.88px;font-size:20.3px;font-weight:400;color:#43956B;-webkit-text-stroke:0.45px #43956B;letter-spacing:0.135px;">View</span>
<span class="t" id="t79" style="left:142.60px;top:1308.93px;font-size:16.6px;font-weight:700;color:#3f946a;-webkit-text-stroke:0.7px #3f946a;letter-spacing:0.550px;transform:scaleX(1.0149);">IN</span>
<span class="t" id="t80" style="left:234.50px;top:1307.32px;font-size:18.5px;font-weight:400;color:#1d1d1d;-webkit-text-stroke:0.7px #1d1d1d;letter-spacing:0.547px;">SN2-007</span>
<span class="t" id="t81" style="left:353.00px;top:1307.32px;font-size:18.5px;font-weight:400;color:#1d1d1d;-webkit-text-stroke:0.7px #1d1d1d;letter-spacing:0.145px;">Feb 9, 2026</span>
<span class="t" id="t82" style="left:531.30px;top:1306.44px;font-size:20.6px;font-weight:400;color:#151515;-webkit-text-stroke:0.75px #151515;letter-spacing:0.550px;transform:scaleX(1.0274);">Office Petty Cash</span>
<span class="t" id="t83" style="left:756.60px;top:1307.64px;font-size:18px;font-weight:400;color:#151515;-webkit-text-stroke:0.8px #151515;letter-spacing:0.431px;">Client Refund Desk</span>
<span class="t" id="t84" style="left:985.10px;top:1306.87px;font-size:19.5px;font-weight:400;color:#777;-webkit-text-stroke:0.2px #777;letter-spacing:0.312px;">Client Cash Refund</span>
<span class="t" id="t85" style="left:1440.50px;top:1300.98px;font-size:20.2px;font-weight:700;color:#3f946a;letter-spacing:0.550px;transform:scaleX(1.1085);">$83.75</span>
<span class="t" id="t86" style="left:1598.00px;top:1306.05px;font-size:17.4px;font-weight:700;color:#4FAE80;-webkit-text-stroke:0.7px #4FAE80;transform:scaleX(0.8398);">EC</span>
<span class="t" id="t87" style="left:1747.10px;top:1306.70px;font-size:20.3px;font-weight:700;color:#43956B;letter-spacing:-0.300px;transform:scaleX(0.9618);">Duplicate</span>
<span class="t" id="t88" style="left:1882.40px;top:1306.70px;font-size:20.3px;font-weight:400;color:#43956B;-webkit-text-stroke:0.45px #43956B;letter-spacing:0.135px;">View</span>
</body></html>
